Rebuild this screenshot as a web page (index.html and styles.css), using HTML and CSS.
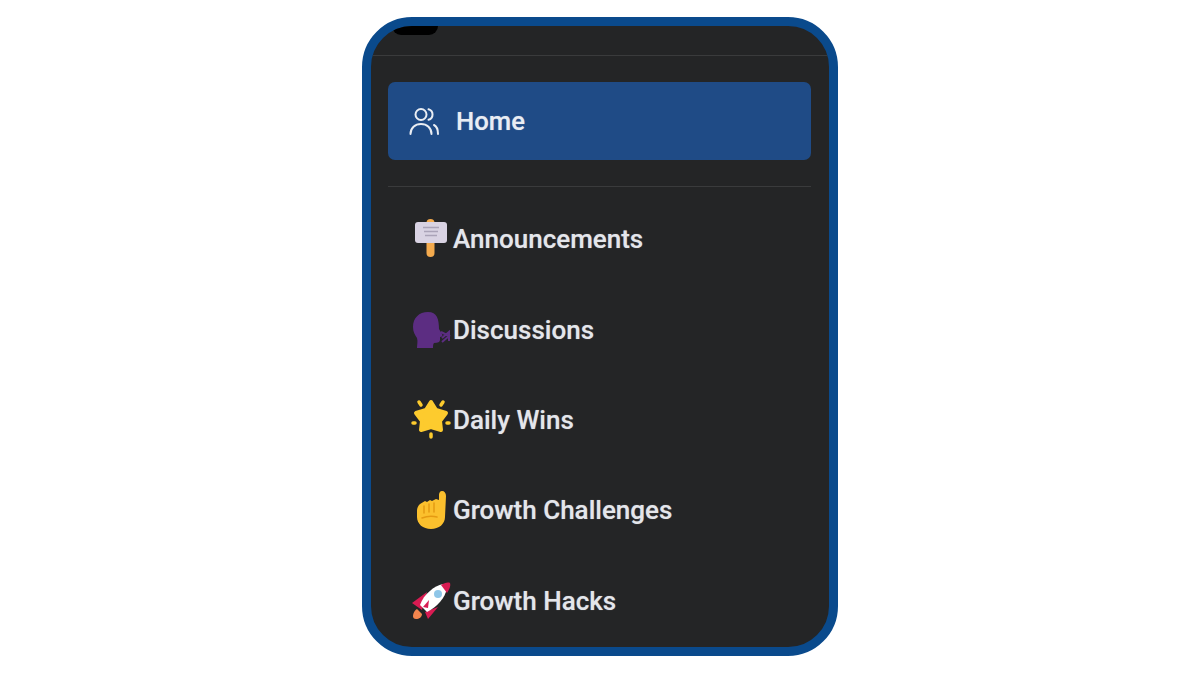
FILE: index.html
```html
<!DOCTYPE html>
<html lang="en">
<head>
    <meta charset="UTF-8">
    <meta name="viewport" content="width=device-width, initial-scale=1.0">
    <title>Community menu</title>
    <link rel="stylesheet" href="styles.css">
</head>
<body>
    <div class="phone">
        <div class="top-bar">
            <div class="top-tab"></div>
        </div>

        <div class="menu">
            <a href="#" class="home-btn">
                <svg class="home-icon" viewBox="0 0 30 28" fill="none" stroke="currentColor" stroke-width="2" stroke-linecap="round" stroke-linejoin="round">
                    <circle cx="12" cy="7.500" r="5.500"/>
                    <path d="M1.500 27c0-6 4.500-10 10.500-10s10.500 4 10.500 10"/>
                    <path d="M19.500 2.200a5.500 5.500 0 0 1 0 10.600"/>
                    <path d="M25 18c3 1.500 4 5 4 9"/>
                </svg>
                <span>Home</span>
            </a>

            <div class="divider"></div>

            <div class="channels">
                <a href="#" class="channel">
                    <svg class="emoji" viewBox="0 0 42 42">
                        <rect x="16.500" y="1" width="8" height="38" rx="4" fill="#f4ab4e"/>
                        <rect x="5" y="4" width="32" height="21" rx="3" fill="#d9d3e3"/>
                        <path d="M13 9.500h16M14 13.500h14M15 17.500h12" stroke="#aaa3b8" stroke-width="1.300"/>
                    </svg>
                    <span>Announcements</span>
                </a>
                <a href="#" class="channel">
                    <svg class="emoji" viewBox="0 0 42 42">
                        <path d="M18 3C9 3 3 9 3 18c0 5 2 8 4 11 1 3 0 7 0 10h16c0-2 0-4 1-5 4 0 6-1 6-3v-3c2 0 3-1 2-3l-3-5C29 10 27 3 18 3z" fill="#5c2d82"/>
                        <path d="M31 23l8 4-7 6M32 29l7-6 0 9" stroke="#5c2d82" stroke-width="2" fill="none"/>
                    </svg>
                    <span>Discussions</span>
                </a>
                <a href="#" class="channel">
                    <svg class="emoji" viewBox="0 0 42 42">
                        <path d="M21 3l5 8 10 3-6 8 1 9-10-3-10 3 1-9-6-8 10-3z" fill="#fdcb2e" stroke="#fdcb2e" stroke-width="4" stroke-linejoin="round"/>
                        <path d="M9 3l2 3M33 3l-2 3M3 24h2M37 24h2M21 35v3" stroke="#fdcb2e" stroke-width="3.500" stroke-linecap="round"/>
                    </svg>
                    <span>Daily Wins</span>
                </a>
                <a href="#" class="channel">
                    <svg class="emoji" viewBox="0 0 42 42">
                        <path d="M32 2c2.500 0 4 2 4 5l-1 21c0 7-6 12-14 12-8 0-14-5-14-12v-6c0-3 1-5 3-7l5-3 2 1 3-2 2 1 4-2 3 1V6c0-2 1-4 3-4z" fill="#fbc02d"/>
                        <path d="M14 17v7M19 15v8M24 14v9M12 29c5-2 11-2 15-1" stroke="#e59a12" stroke-width="1.500" fill="none" stroke-linecap="round"/>
                    </svg>
                    <span>Growth Challenges</span>
                </a>
                <a href="#" class="channel">
                    <svg class="emoji" viewBox="0 0 42 42">
                        <path d="M7 29l5 5c0 3-3 5-6 5-2 0-3-1-3-3 0-3 2-6 4-7z" fill="#f2854e"/>
                        <path d="M2 23l15-11-5 18zM18 39l10-12-13 5z" fill="#d81b52"/>
                        <path d="M17 32l-7-7C14 14 24 6 33 4l4 4c-2 10-9 18-20 24z" fill="#fff"/>
                        <path d="M31 5c3-2 7-3 9-2 1 3-1 7-3 10z" fill="#d81b52"/>
                        <path d="M13 27l6-7-1 8z" fill="#d81b52"/>
                        <circle cx="28" cy="14" r="4" fill="#8fc6e8"/>
                    </svg>
                    <span>Growth Hacks</span>
                </a>
            </div>
        </div>
    </div>
</body>
</html>
```

FILE: styles.css
```css
* {
    margin: 0;
    padding: 0;
    box-sizing: border-box;
}

body {
    font-family: Roboto, 'Liberation Sans', sans-serif;
    background-color: white;
}

.phone {
    width: 476px;
    height: 639px;
    margin: 17px auto 0;
    background: #242526;
    border: 9px solid #0a4a8c;
    border-radius: 50px;
    overflow: hidden;
}

.top-bar {
    height: 30px;
    border-bottom: 1px solid #3a3b3c;
}

.top-tab {
    width: 46px;
    height: 9px;
    margin-left: 21px;
    background: black;
    border-radius: 0 0 10px 10px;
}

.menu {
    padding: 26px 18px 0 17px;
}

.home-btn {
    display: flex;
    align-items: center;
    height: 78px;
    padding-left: 21px;
    background: #1f4b86;
    border-radius: 7px;
    color: #e9edf3;
    text-decoration: none;
    font-size: 25.7px;
    font-weight: 500;
    text-shadow: 0 0 1px rgba(233, 237, 243, 0.5);
}

.home-icon {
    width: 30px;
    height: 28px;
    margin-right: 17px;
}

.divider {
    height: 1px;
    margin-top: 26px;
    background: #3a3b3c;
}

.channels {
    padding-top: 7px;
}

.channel {
    display: flex;
    align-items: center;
    height: 90.4px;
    padding-left: 22px;
    color: #e4e6eb;
    text-decoration: none;
    font-size: 26px;
    font-weight: 500;
    text-shadow: 0 0 1px rgba(228, 230, 235, 0.5);
}

.emoji {
    width: 42px;
    height: 42px;
    margin-right: 1px;
    flex-shrink: 0;
}
```
